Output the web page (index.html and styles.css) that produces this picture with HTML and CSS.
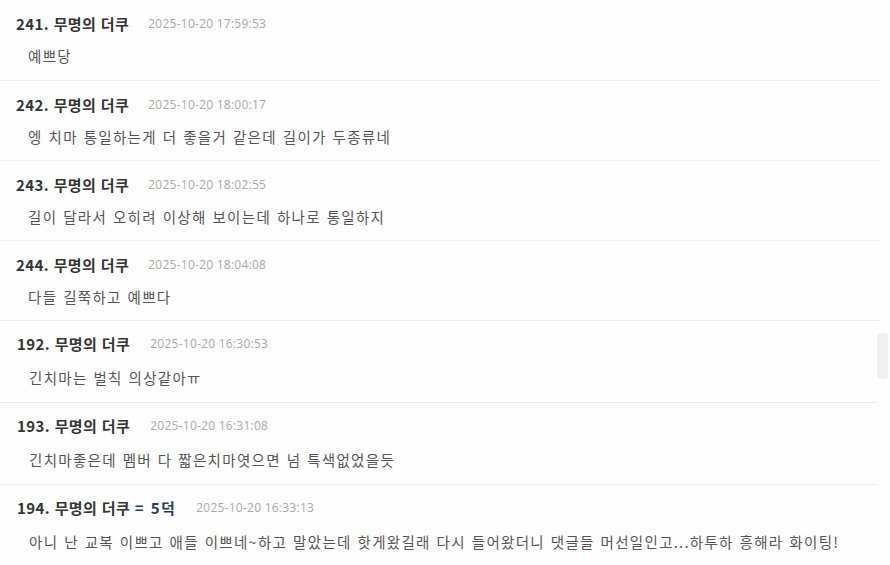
FILE: index.html
```html
<!DOCTYPE html>
<html lang="ko">
<head>
<meta charset="utf-8">
<link rel="stylesheet" href="styles.css">
</head>
<body>
<div class="page">
  <section class="list list-top">
    <article class="row">
      <div class="head"><span class="name">241. 무명의 더쿠</span><span class="time">2025-10-20 17:59:53</span></div>
      <p class="body">예쁘당</p>
    </article>
    <article class="row">
      <div class="head"><span class="name">242. 무명의 더쿠</span><span class="time">2025-10-20 18:00:17</span></div>
      <p class="body">엥 치마 통일하는게 더 좋을거 같은데 길이가 두종류네</p>
    </article>
    <article class="row">
      <div class="head"><span class="name">243. 무명의 더쿠</span><span class="time">2025-10-20 18:02:55</span></div>
      <p class="body">길이 달라서 오히려 이상해 보이는데 하나로 통일하지</p>
    </article>
    <article class="row">
      <div class="head"><span class="name">244. 무명의 더쿠</span><span class="time">2025-10-20 18:04:08</span></div>
      <p class="body">다들 길쭉하고 예쁘다</p>
    </article>
  </section>
  <section class="list list-bottom">
    <div class="scrollbar"></div>
    <article class="row">
      <div class="head"><span class="name">192. 무명의 더쿠</span><span class="time">2025-10-20 16:30:53</span></div>
      <p class="body">긴치마는 벌칙 의상같아ㅠ</p>
    </article>
    <article class="row">
      <div class="head"><span class="name">193. 무명의 더쿠</span><span class="time">2025-10-20 16:31:08</span></div>
      <p class="body">긴치마좋은데 멤버 다 짧은치마엿으면 넘 특색없었을듯</p>
    </article>
    <article class="row">
      <div class="head"><span class="name">194. 무명의 더쿠 <span class="tag">= 5덕</span></span><span class="time">2025-10-20 16:33:13</span></div>
      <p class="body">아니 난 교복 이쁘고 애들 이쁘네~하고 말았는데 핫게왔길래 다시 들어왔더니 댓글들 머선일인고...하투하 흥해라 화이팅!</p>
    </article>
  </section>
</div>
</body>
</html>
```

FILE: styles.css
```css
* { box-sizing: border-box; }
html, body {
  margin: 0;
  padding: 0;
  background: #fefefe;
}
body {
  width: 890px;
  height: 565px;
  overflow: hidden;
  font-family: "Noto Sans CJK KR", "Noto Sans", sans-serif;
}
.page {
  display: flex;
  flex-direction: column;
}
.list {
  position: relative;
  display: flex;
  flex-direction: column;
}
.list-top {
  width: 880px;
}
.list-bottom {
  width: 876px;
}
.row {
  display: flex;
  flex-direction: column;
  border-bottom: 1px solid #f2f2f2;
}
.list-top .row {
  height: 80px;
  padding: 13px 0 0 16px;
}
.list-top .row:first-child { height: 81px; border-bottom-color: #f0f0f0; }
.list-bottom .row {
  height: 82px;
  padding: 12px 0 0 17px;
  border-bottom-color: #ebebeb;
}
.list-top .row:last-child { height: 80px; border-bottom-color: #ececec; }
.list-bottom .row:last-child { border-bottom: none; }
.head {
  display: flex;
  align-items: center;
  height: 20px;
  gap: 19px;
}
.list-bottom .head { gap: 20px; }
.name {
  font-size: 15px;
  font-weight: 700;
  color: #353535;
  letter-spacing: 0.4px;
}
.tag {
  color: #25405c;
  letter-spacing: 1.4px;
}
.time {
  font-family: "Open Sans", "Noto Sans", sans-serif;
  font-size: 12px;
  color: #a9a9a9;
  letter-spacing: 0.25px;
}
.body {
  margin: 13px 0 0 12px;
  height: 20px;
  line-height: 20px;
  font-size: 14.5px;
  color: #555;
  letter-spacing: 1.3px;
  word-spacing: 0.5px;
}
.list-bottom .body {
  margin-top: 15px;
}
.scrollbar {
  position: absolute;
  right: -12px;
  top: 12px;
  width: 11px;
  height: 46px;
  border-radius: 4px;
  background: #f0f0f0;
}
```
